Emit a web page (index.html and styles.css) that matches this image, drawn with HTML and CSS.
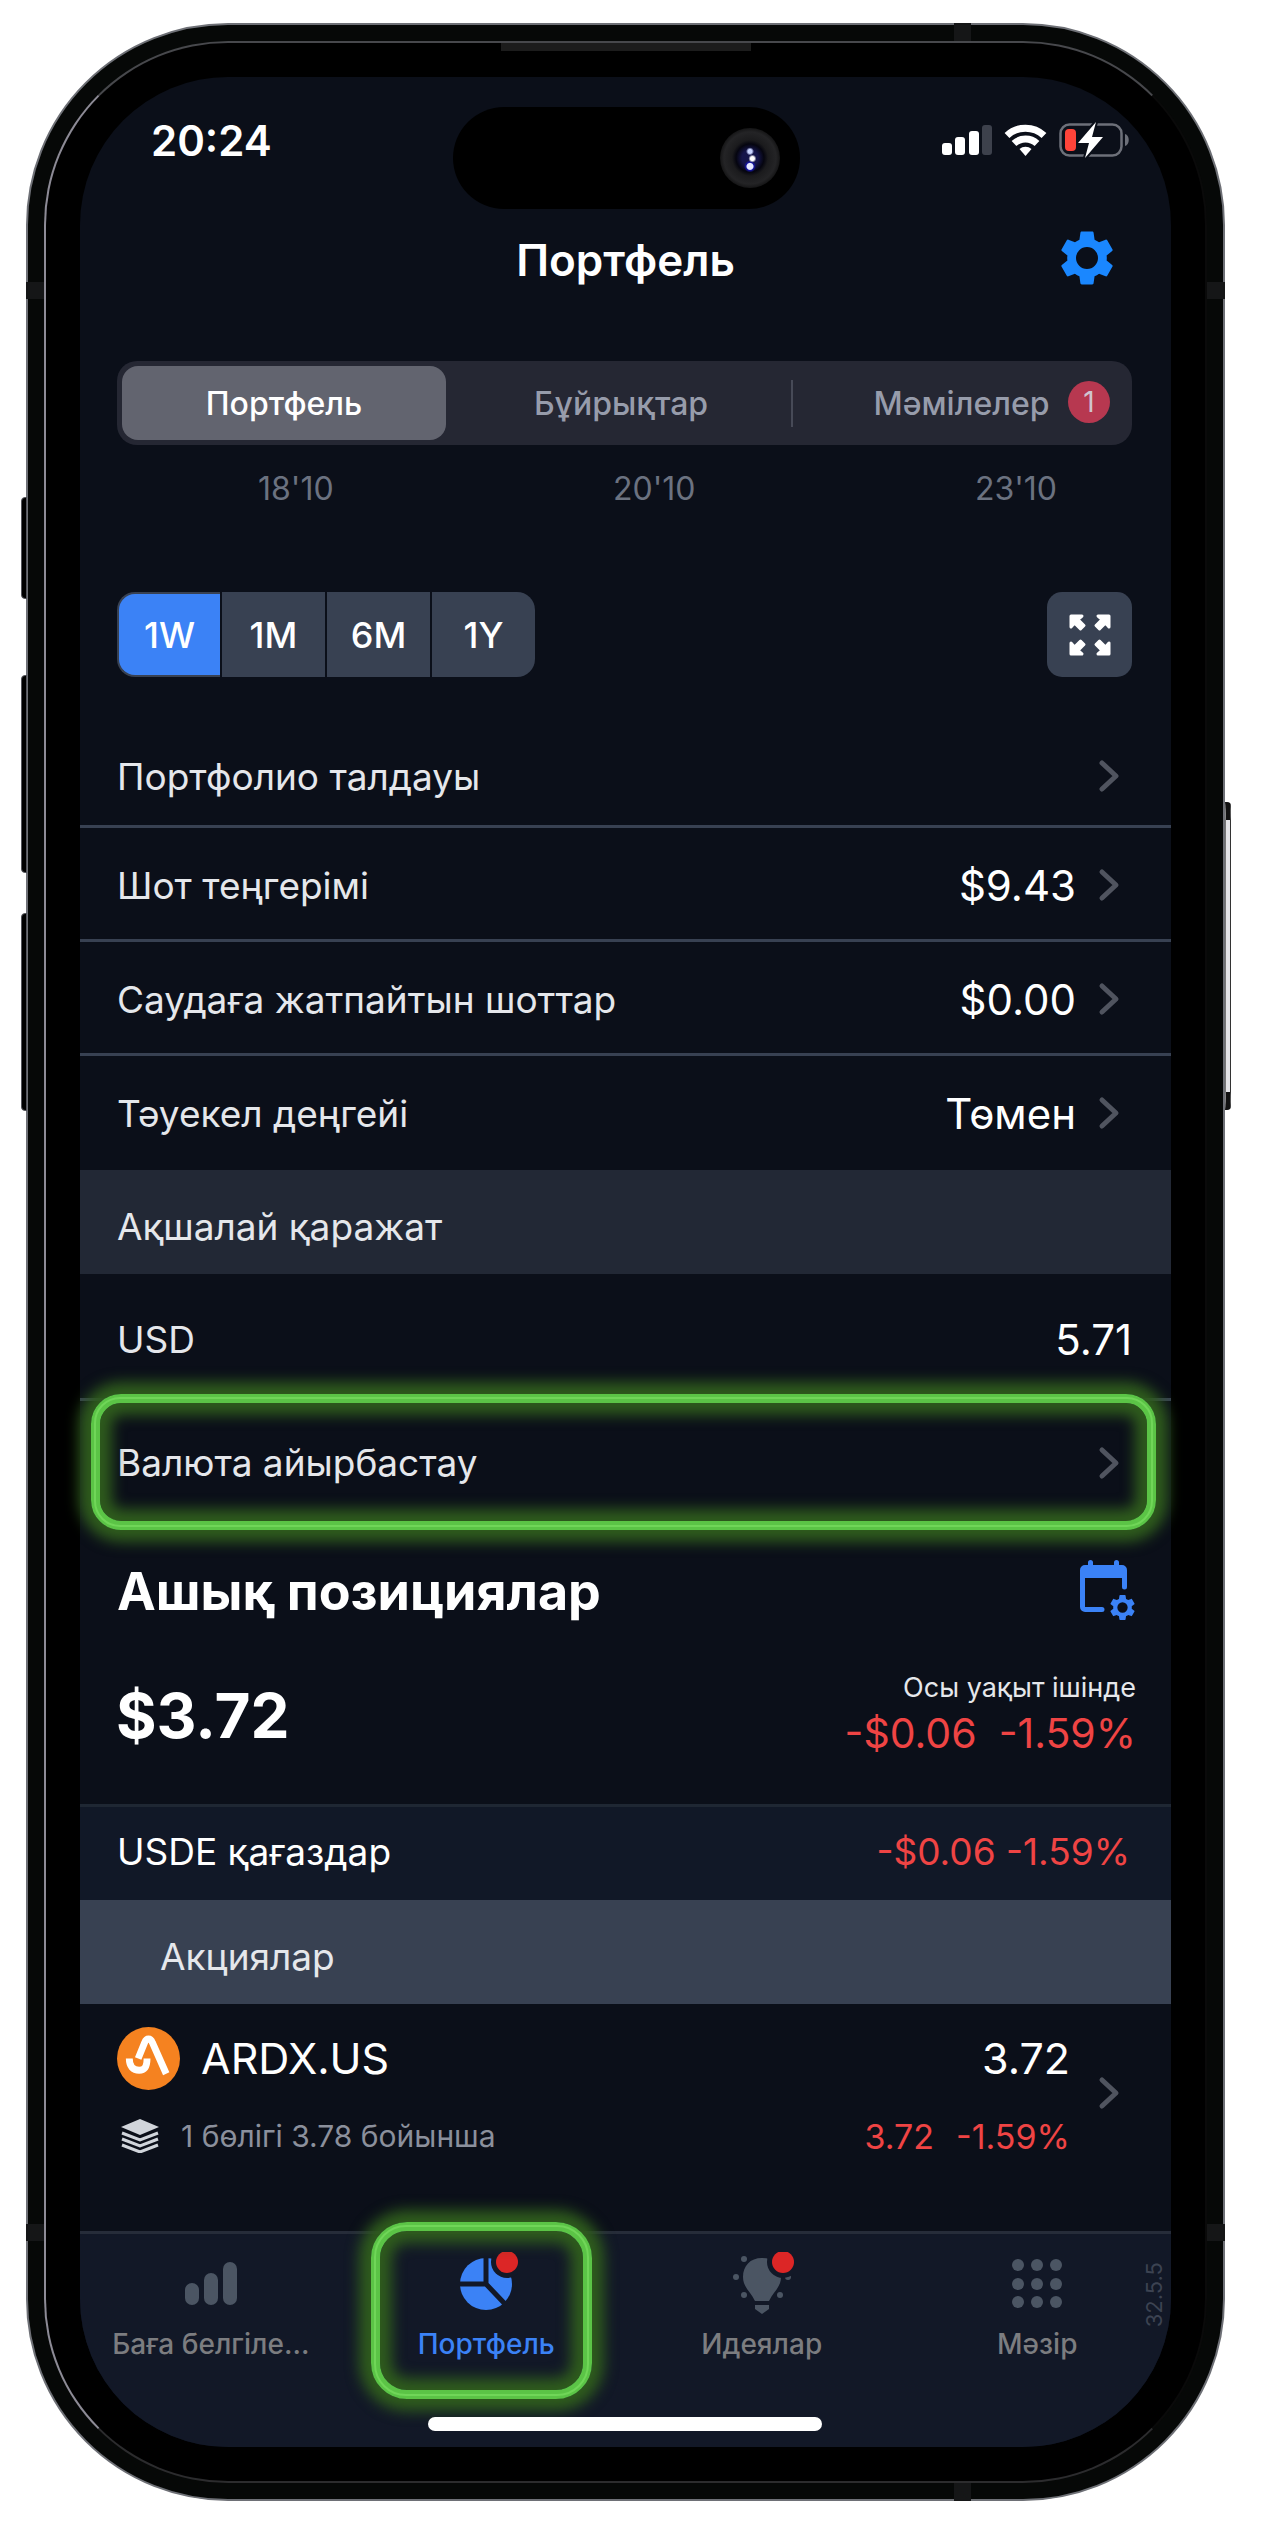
FILE: index.html
```html
<!DOCTYPE html>
<html lang="kk">
<head>
    <meta charset="UTF-8">
    <meta name="viewport" content="width=device-width, initial-scale=1.0">
    <title>Портфель</title>
    <link rel="stylesheet" href="styles.css">
</head>
<body>
    <svg class="defs" aria-hidden="true">
        <symbol id="chevron" viewBox="0 0 22 34">
            <path d="M4 4l14 13L4 30" fill="none" stroke="#50545f" stroke-width="5" stroke-linecap="round" stroke-linejoin="round"/>
        </symbol>
        <symbol id="gear" viewBox="0 0 24 24">
            <path fill-rule="evenodd" d="M19.14 12.94c.04-.3.06-.61.06-.94 0-.32-.02-.64-.07-.94l2.03-1.58c.18-.14.23-.41.12-.61l-1.92-3.32c-.12-.22-.37-.29-.59-.22l-2.39.96c-.5-.38-1.03-.7-1.62-.94l-.36-2.54c-.04-.24-.24-.41-.48-.41h-3.84c-.24 0-.43.17-.47.41l-.36 2.54c-.59.24-1.13.57-1.62.94l-2.39-.96c-.22-.08-.47 0-.59.22L2.74 8.87c-.12.21-.08.47.12.61l2.03 1.58c-.05.3-.09.63-.09.94s.02.64.07.94l-2.03 1.58c-.18.14-.23.41-.12.61l1.92 3.32c.12.22.37.29.59.22l2.39-.96c.5.38 1.03.7 1.62.94l.36 2.54c.05.24.24.41.48.41h3.84c.24 0 .44-.17.47-.41l.36-2.54c.59-.24 1.13-.56 1.62-.94l2.39.96c.22.08.47 0 .59-.22l1.92-3.32c.12-.22.07-.47-.12-.61l-2.01-1.58zM12 16a4 4 0 1 1 0-8 4 4 0 0 1 0 8z"/>
        </symbol>
    </svg>

    <div class="phone">
        <span class="side-button mute"></span>
        <span class="side-button volume-up"></span>
        <span class="side-button volume-down"></span>
        <span class="side-button power"></span>
        <span class="antenna left top"></span>
        <span class="antenna right top"></span>
        <span class="antenna left bottom"></span>
        <span class="antenna right bottom"></span>
        <span class="antenna edge-top"></span>
        <span class="antenna edge-bottom"></span>

        <div class="bezel">
            <span class="speaker"></span>
            <div class="screen">
                <div class="island"><span class="camera"></span></div>

                <div class="status-bar">
                    <span class="time">20:24</span>
                    <div class="status-icons">
                        <svg width="50" height="34" viewBox="0 0 50 34" fill="#fff">
                            <rect x="0" y="20" width="10" height="12" rx="3"/>
                            <rect x="13" y="14" width="10" height="18" rx="3"/>
                            <rect x="27" y="8" width="10" height="24" rx="3"/>
                            <rect x="40" y="2" width="10" height="30" rx="3" fill="#3d414c"/>
                        </svg>
                        <svg width="43" height="34" viewBox="0 0 43 34">
                            <g fill="none" stroke="#fff" stroke-width="7">
                                <path d="M3 12.5a27 27 0 0 1 37 0"/>
                                <path d="M10 20.500a17 17 0 0 1 23 0"/>
                            </g>
                            <path d="M21.500 33l-6-7a9 9 0 0 1 12 0z" fill="#fff"/>
                        </svg>
                        <svg width="72" height="38" viewBox="0 0 72 38">
                            <rect x="1.500" y="3.500" width="61" height="31" rx="9" fill="none" stroke="#6d7079" stroke-width="2.500"/>
                            <path d="M66 13c5 1 5 11 0 12z" fill="#6d7079"/>
                            <rect x="6" y="8" width="11" height="22" rx="4" fill="#ff443a"/>
                            <path d="M37 1L19 22h11l-4 15 18-21H33z" fill="#fff" stroke="#0b0f19" stroke-width="4" paint-order="stroke" stroke-linejoin="round"/>
                        </svg>
                    </div>
                </div>

                <header class="header">
                    <h1>Портфель</h1>
                    <button class="settings" aria-label="Баптаулар">
                        <svg width="66" height="66" fill="#1a87ff"><use href="#gear"/></svg>
                    </button>
                </header>

                <div class="segments">
                    <button class="segment active">Портфель</button>
                    <button class="segment">Бұйрықтар</button>
                    <button class="segment divided">Мәмілелер<span class="badge">1</span></button>
                </div>

                <div class="dates">
                    <span>18'10</span>
                    <span>20'10</span>
                    <span>23'10</span>
                </div>

                <div class="toolbar">
                    <div class="ranges">
                        <button class="range active">1W</button>
                        <button class="range">1M</button>
                        <button class="range">6M</button>
                        <button class="range">1Y</button>
                    </div>
                    <button class="expand" aria-label="Толық экран">
                        <svg width="42" height="42" viewBox="0 0 42 42" fill="#fff" stroke="#fff" stroke-width="3" stroke-linejoin="round">
                            <path d="M2 2h11l-4 3.500 6 6-3.500 3.500-6-6L2 13z"/>
                            <path d="M40 2v11l-3.500-4-6 6-3.500-3.500 6-6L29 2z"/>
                            <path d="M2 40V29l3.500 4 6-6 3.500 3.500-6 6L13 40z"/>
                            <path d="M40 40H29l4-3.500-6-6 3.500-3.500 6 6L40 29z"/>
                        </svg>
                    </button>
                </div>

                <main>
                    <a class="row first" href="#">
                        <span class="label">Портфолио талдауы</span>
                        <svg class="chevron"><use href="#chevron"/></svg>
                    </a>
                    <a class="row" href="#">
                        <span class="label">Шот теңгерімі</span>
                        <span class="value">$9.43</span>
                        <svg class="chevron"><use href="#chevron"/></svg>
                    </a>
                    <a class="row" href="#">
                        <span class="label">Саудаға жатпайтын шоттар</span>
                        <span class="value">$0.00</span>
                        <svg class="chevron"><use href="#chevron"/></svg>
                    </a>
                    <a class="row last" href="#">
                        <span class="label">Тәуекел деңгейі</span>
                        <span class="value">Төмен</span>
                        <svg class="chevron"><use href="#chevron"/></svg>
                    </a>
                    <h2 class="band">Ақшалай қаражат</h2>
                    <div class="row cash">
                        <span class="label">USD</span>
                        <span class="value">5.71</span>
                    </div>
                    <a class="row exchange" href="#">
                        <span class="label">Валюта айырбастау</span>
                        <svg class="chevron"><use href="#chevron"/></svg>
                        <span class="highlight"></span>
                    </a>

                    <div class="positions-head">
                        <h2>Ашық позициялар</h2>
                        <button class="calendar" aria-label="Кезең">
                            <svg width="56" height="62" viewBox="0 0 56 62" fill="#3b82f6">
                                <path d="M8 2.500a2.500 2.500 0 0 1 5 0V5h21V2.500a2.500 2.500 0 0 1 5 0V5h3a5 5 0 0 1 5 5v17a2.500 2.500 0 0 1-5 0V18H5v29h17a2.500 2.500 0 0 1 0 5H5a5 5 0 0 1-5-5V10a5 5 0 0 1 5-5h3z"/>
                                <use href="#gear" x="27" y="32" width="31" height="31"/>
                            </svg>
                        </button>
                    </div>
                    <div class="summary">
                        <strong class="total">$3.72</strong>
                        <div class="change">
                            <span class="period">Осы уақыт ішінде</span>
                            <span class="loss"><span>-$0.06</span><span>-1.59%</span></span>
                        </div>
                    </div>

                    <div class="group">
                        <span>USDE қағаздар</span>
                        <span class="red">-$0.06 -1.59%</span>
                    </div>
                    <h3 class="band stocks">Акциялар</h3>
                    <a class="position" href="#">
                        <div class="position-body">
                            <div class="line main-line">
                                <svg class="logo" viewBox="0 0 64 64">
                                    <circle cx="32" cy="32" r="32" fill="#f58220"/>
                                    <path d="M12.500 32c0 8 4 12 10 12s8-4 8-12" fill="none" stroke="#fff" stroke-width="7"/>
                                    <path d="M21.500 32L28 16c2-5 6-5 8 0l14 31.500" fill="none" stroke="#fff" stroke-width="7"/>
                                </svg>
                                <span class="ticker">ARDX.US</span>
                                <span class="amount">3.72</span>
                            </div>
                            <div class="line sub-line">
                                <svg class="layers" viewBox="0 0 38 34">
                                    <path d="M19 0l19 8-19 8L0 8z" fill="#d1d5db"/>
                                    <path d="M1 14l18 7 18-7M1 20l18 7 18-7M1 26l18 7 18-7" fill="none" stroke="#d1d5db" stroke-width="3"/>
                                </svg>
                                <span class="parts">1 бөлігі 3.78 бойынша</span>
                                <span class="red small"><span>3.72</span><span>-1.59%</span></span>
                            </div>
                        </div>
                        <svg class="chevron"><use href="#chevron"/></svg>
                    </a>
                </main>

                <nav class="tab-bar">
                    <div class="tabs">
                        <a class="tab" href="#">
                            <svg viewBox="0 0 64 64" fill="#4b5563">
                                <rect x="6" y="31" width="14" height="22" rx="7"/>
                                <rect x="25" y="21" width="14" height="32" rx="7"/>
                                <rect x="44" y="10" width="14" height="43" rx="7"/>
                            </svg>
                            <span>Баға белгіле...</span>
                        </a>
                        <a class="tab current" href="#">
                            <svg viewBox="0 0 64 64">
                                <circle cx="32" cy="32" r="26" fill="#3b82f6"/>
                                <path d="M32 4v28H4M32 32l20 21" fill="none" stroke="#121827" stroke-width="5"/>
                                <circle cx="53" cy="10" r="16" fill="#121827"/>
                                <circle cx="53" cy="10" r="11" fill="#dc2626"/>
                            </svg>
                            <span>Портфель</span>
                            <span class="highlight"></span>
                        </a>
                        <a class="tab" href="#">
                            <svg viewBox="0 0 64 64" fill="#4b5563">
                                <path d="M32 6c12 0 19 8 19 19 0 10-7 14-12 24H25C20 39 13 35 13 25 13 14 20 6 32 6zM25 53h14v4l-7 5-7-5z"/>
                                <circle cx="14" cy="7" r="3"/>
                                <circle cx="6" cy="25" r="3"/>
                                <circle cx="14" cy="43" r="3"/>
                                <circle cx="50" cy="43" r="3"/>
                                <circle cx="58" cy="25" r="3"/>
                                <circle cx="53" cy="10" r="16" fill="#121827"/>
                                <circle cx="53" cy="10" r="11" fill="#dc2626"/>
                            </svg>
                            <span>Идеялар</span>
                        </a>
                        <a class="tab" href="#">
                            <svg viewBox="0 0 64 64" fill="#4b5563">
                                <circle cx="13" cy="13" r="6"/><circle cx="32" cy="13" r="6"/><circle cx="51" cy="13" r="6"/>
                                <circle cx="13" cy="32" r="6"/><circle cx="32" cy="32" r="6"/><circle cx="51" cy="32" r="6"/>
                                <circle cx="13" cy="50" r="6"/><circle cx="32" cy="50" r="6"/><circle cx="51" cy="50" r="6"/>
                            </svg>
                            <span>Мәзір</span>
                        </a>
                    </div>
                    <span class="version">32.5.5</span>
                    <div class="home-indicator"></div>
                </nav>
            </div>
        </div>
    </div>
</body>
</html>
```

FILE: styles.css
```css
* {
    margin: 0;
    padding: 0;
    box-sizing: border-box;
}

body {
    background: #fff;
    font-family: Inter, "Noto Sans", sans-serif;
    color: #fff;
}

a {
    color: inherit;
    text-decoration: none;
}

button {
    border: none;
    background: none;
    font: inherit;
    color: inherit;
    cursor: pointer;
}

svg {
    display: block;
    flex-shrink: 0;
}

.defs {
    position: absolute;
    width: 0;
    height: 0;
}

/* Phone body */
.phone {
    position: relative;
    margin: 23px 36px 26px 26px;
    padding: 16px;
    border: 2px solid #6e7076;
    border-radius: 202px;
    background: #060807;
}

.bezel {
    position: relative;
    padding: 34px;
    border: 2px solid;
    border-color: #47484c #0a0a0a #2c2c2e #8d8b96;
    border-radius: 184px;
    background: #000;
}

.side-button {
    position: absolute;
    left: -7px;
    width: 6px;
    border: 1px solid #55565c;
    border-radius: 4px 0 0 4px;
    background: #000;
}

.mute {
    top: 472px;
    height: 102px;
}

.volume-up {
    top: 650px;
    height: 198px;
}

.volume-down {
    top: 888px;
    height: 198px;
}

.power {
    top: 777px;
    left: auto;
    right: -8px;
    height: 308px;
    border-color: #111 #333 #111 #777;
    border-width: 18px 1px;
    border-radius: 0 4px 4px 0;
    background: #e4e4e8;
}

.antenna {
    position: absolute;
    width: 20px;
    height: 17px;
    background: #151617;
}

.antenna.left {
    left: -2px;
}

.antenna.right {
    right: -2px;
}

.antenna.top {
    top: 257px;
}

.antenna.bottom {
    bottom: 258px;
}

.antenna.edge-top,
.antenna.edge-bottom {
    right: 252px;
    width: 17px;
    height: 20px;
}

.antenna.edge-top {
    top: -2px;
}

.antenna.edge-bottom {
    bottom: -2px;
}

.speaker {
    position: absolute;
    top: 0;
    left: 50%;
    width: 250px;
    height: 8px;
    margin-left: -125px;
    background: #1c1c1c;
}

.screen {
    position: relative;
    border-radius: 148px;
    background: #0b0f19;
}

.island {
    position: absolute;
    top: 30px;
    left: 50%;
    width: 347px;
    height: 102px;
    margin-left: -173px;
    border-radius: 51px;
    background: #000;
}

.camera {
    position: absolute;
    top: 21px;
    right: 20px;
    width: 60px;
    height: 60px;
    border-radius: 50%;
    background:
        radial-gradient(circle at 50% 39%, #c9d4ff 0 2px, transparent 4px),
        radial-gradient(circle at 54% 51%, #fff 0 2px, transparent 4px),
        radial-gradient(circle at 50% 64%, #e4e8ff 0 3px, #1414a0 4px, transparent 6px),
        radial-gradient(circle, #15154a 0 8px, #05050f 14px, #1b1b1d 18px, #242426 26px, #151516 30px);
}

/* Status bar and header */
.status-bar {
    display: flex;
    justify-content: space-between;
    align-items: center;
    height: 126px;
    padding: 0 40px 0 71px;
}

.time {
    font-size: 42px;
    font-weight: 600;
}

.status-icons {
    display: flex;
    align-items: center;
    gap: 12px;
}

.header {
    position: relative;
    display: flex;
    justify-content: center;
    align-items: center;
    height: 114px;
}

.header h1 {
    font-size: 44px;
    font-weight: 600;
}

.settings {
    position: absolute;
    top: 22px;
    right: 51px;
}

/* Segmented control */
.segments {
    display: grid;
    grid-template-columns: 324fr 334fr 331fr;
    gap: 8px;
    height: 84px;
    margin: 44px 39px 0 37px;
    padding: 5px;
    border-radius: 20px;
    background: #252733;
}

.segment {
    position: relative;
    border-radius: 16px;
    font-size: 32px;
    font-weight: 500;
    color: #979cab;
}

.segment.active {
    background: #62646f;
    color: #fff;
}

.segment.divided::before {
    content: "";
    position: absolute;
    top: 14px;
    left: -5px;
    width: 2px;
    height: 47px;
    background: #474a57;
}

.badge {
    position: absolute;
    top: 15px;
    right: 17px;
    width: 42px;
    border-radius: 50%;
    background: #b73850;
    font-size: 28px;
    font-weight: 400;
    line-height: 42px;
    color: #d0c4cf;
}

.dates {
    display: flex;
    justify-content: space-between;
    margin-top: 21px;
    padding: 0 114px 0 178px;
    font-size: 32px;
    line-height: 46px;
    color: #6b7280;
}

.toolbar {
    display: flex;
    justify-content: space-between;
    margin: 80px 39px 50px 37px;
}

.ranges {
    display: flex;
    gap: 2px;
}

.range {
    width: 103px;
    height: 85px;
    background: #384152;
    font-size: 36px;
    font-weight: 500;
}

.range:first-child {
    border-radius: 18px 0 0 18px;
}

.range:last-child {
    border-radius: 0 18px 18px 0;
}

.range.active {
    border: 2px solid #384152;
    border-right: none;
    background: #3b82f6;
}

.expand {
    display: flex;
    justify-content: center;
    align-items: center;
    width: 85px;
    height: 85px;
    border-radius: 15px;
    background: #384152;
}

/* Account rows */
.row {
    position: relative;
    display: flex;
    align-items: center;
    gap: 22px;
    height: 114px;
    padding: 3px 51px 0 37px;
    border-bottom: 3px solid #384152;
}

.row.first {
    height: 101px;
    padding-top: 0;
}

.row.last {
    border-color: transparent;
}

.row.cash {
    height: 127px;
    padding: 6px 39px 0 37px;
}

.row.exchange {
    height: 123px;
    padding-top: 0;
    border: none;
}

.label {
    flex: 1;
    font-size: 37px;
    color: #e5e7eb;
}

.value {
    font-size: 42px;
}

.chevron {
    width: 22px;
    height: 34px;
}

.band {
    padding: 10px 37px 0;
    background: #222835;
    font-size: 37px;
    font-weight: 400;
    line-height: 94px;
    color: #e5e7eb;
}

.highlight {
    position: absolute;
    inset: -7px 15px -6px 11px;
    border: 9px solid #5bc446;
    border-radius: 30px;
    box-shadow: 0 0 14px 12px #2f5c1d, inset 0 0 14px 12px #2f5c1d;
    pointer-events: none;
}

.highlight::before {
    content: "";
    position: absolute;
    inset: -6px;
    border: 2px solid #70d658;
    border-radius: 26px;
}

/* Open positions */
.positions-head {
    display: flex;
    justify-content: space-between;
    align-items: center;
    height: 134px;
    padding: 0 35px 0 37px;
}

.positions-head h2 {
    font-size: 52px;
    font-weight: 700;
}

.summary {
    display: flex;
    justify-content: space-between;
    align-items: center;
    height: 114px;
    margin-bottom: 32px;
    padding: 0 35px 0 36px;
}

.total {
    font-size: 62px;
    font-weight: 700;
}

.change {
    display: flex;
    flex-direction: column;
    align-items: flex-end;
}

.period {
    font-size: 27px;
    line-height: 36px;
    color: #e5e7eb;
}

.loss {
    display: flex;
    gap: 22px;
    font-size: 41px;
    line-height: 54px;
    color: #ef4444;
}

.group {
    display: flex;
    justify-content: space-between;
    align-items: center;
    height: 96px;
    padding: 0 41px 5px 37px;
    border-top: 3px solid #1f2733;
    background: #111827;
    font-size: 37px;
}

.red {
    color: #ef4444;
}

.stocks {
    padding-left: 80px;
    background: #384152;
}

.position {
    display: flex;
    align-items: center;
    gap: 28px;
    padding: 18px 51px 67px 37px;
}

.position-body {
    flex: 1;
    display: flex;
    flex-direction: column;
    gap: 14px;
}

.line {
    display: flex;
    align-items: center;
}

.main-line {
    height: 72px;
    font-size: 43px;
}

.logo {
    width: 63px;
    height: 63px;
}

.ticker {
    flex: 1;
    margin-left: 21px;
}

.sub-line {
    height: 56px;
}

.layers {
    width: 38px;
    height: 34px;
    margin-left: 4px;
}

.parts {
    flex: 1;
    margin-left: 22px;
    font-size: 30px;
    color: #8b909c;
}

.small {
    display: flex;
    gap: 22px;
    font-size: 34px;
}

/* Bottom tabs */
.tab-bar {
    position: relative;
    height: 216px;
    border-top: 3px solid #262c39;
    border-radius: 0 0 148px 148px;
    background: #121827;
}

.tabs {
    display: grid;
    grid-template-columns: repeat(4, 1fr);
    margin: 0 -4px 0 -7px;
}

.tab {
    position: relative;
    display: flex;
    flex-direction: column;
    align-items: center;
    gap: 8px;
    padding-top: 18px;
    font-size: 28px;
    font-weight: 500;
    line-height: 40px;
    color: #7c7d80;
}

.tab svg {
    width: 64px;
    height: 64px;
}

.tab.current {
    color: #3b82f6;
}

.tab .highlight {
    inset: -12px 32px auto 22px;
    height: 177px;
    border-radius: 36px;
}

.tab .highlight::before {
    border-radius: 32px;
}

.version {
    position: absolute;
    top: 28px;
    right: 6px;
    font-size: 22px;
    line-height: 22px;
    color: #3c4352;
    writing-mode: vertical-rl;
    transform: rotate(180deg);
}

.home-indicator {
    position: absolute;
    bottom: 16px;
    left: 50%;
    width: 394px;
    height: 14px;
    margin-left: -198px;
    border-radius: 7px;
    background: #fff;
}
```
